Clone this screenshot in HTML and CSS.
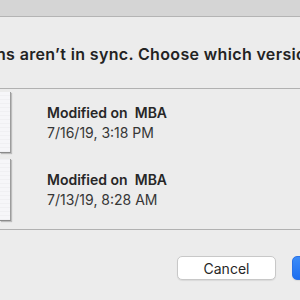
FILE: index.html
```html
<!DOCTYPE html>
<html lang="en">

<head>
    <meta charset="UTF-8">
    <meta name="viewport" content="width=device-width, initial-scale=1.0">
    <title>Versions</title>
    <link rel="stylesheet" href="styles.css">
</head>

<body>
    <div class="titlebar"></div>

    <div class="message">
        <p class="message-text">The versions aren’t in sync. Choose which version to keep.</p>
    </div>

    <div class="versions">
        <div class="version">
            <div class="thumb"></div>
            <div class="info">
                <div class="where">Modified on&nbsp; MBA</div>
                <div class="when">7/16/19, 3:18 PM</div>
            </div>
        </div>
        <div class="version">
            <div class="thumb tall"></div>
            <div class="info">
                <div class="where">Modified on&nbsp; MBA</div>
                <div class="when">7/13/19, 8:28 AM</div>
            </div>
        </div>
    </div>

    <div class="footer">
        <button class="btn">Cancel</button>
        <button class="btn default">Keep</button>
    </div>
</body>

</html>
```

FILE: styles.css
```css
body {
    margin: 0;
    width: 300px;
    height: 300px;
    overflow: hidden;
    background: #ececec;
    font-family: 'Inter', 'Liberation Sans', sans-serif;
    color: #262626;
}

.titlebar {
    height: 16px;
    background: #d5d5d5;
    border-bottom: 1px solid #b4b4b4;
}

.message {
    height: 72px;
    box-sizing: border-box;
    padding-top: 27px;
    border-bottom: 1px solid #b1b1b1;
}

.message-text {
    margin: 0 0 0 -89px;
    white-space: nowrap;
    font-size: 16px;
    line-height: 20px;
    letter-spacing: 0.35px;
    font-weight: 600;
    color: #232323;
}

.versions {
    display: flex;
    flex-direction: column;
    gap: 6px;
    padding: 3px 0 8px;
    border-bottom: 1px solid #b1b1b1;
}

.version {
    display: flex;
    align-items: center;
    gap: 36px;
}

.thumb {
    width: 11px;
    height: 61px;
    box-sizing: border-box;
    background-color: #f6f6f9;
    background-image: repeating-linear-gradient(0deg, rgba(0, 0, 0, 0.025) 0 1px, transparent 1px 4px);
    border-right: 1px solid #9c9c9c;
    border-bottom: 1px solid #8a8a8a;
    box-shadow: 1px 1px 1px rgba(0, 0, 0, 0.2);
}

.thumb.tall {
    height: 62px;
}

.info {
    font-size: 14px;
    line-height: 20px;
}

.where {
    font-weight: 600;
    color: #272727;
}

.when {
    color: #363636;
}

.footer {
    display: flex;
    gap: 16px;
    padding: 26px 0 0 177px;
}

.btn {
    flex-shrink: 0;
    width: 99px;
    height: 24px;
    padding: 0;
    font-family: inherit;
    font-size: 14px;
    color: #262626;
    background: #fff;
    border: 1px solid #c8c8c8;
    border-radius: 5px;
    box-shadow: 0 1px 1px rgba(0, 0, 0, 0.08);
}

.btn.default {
    color: #fff;
    background: linear-gradient(#3c8cf8, #1c6ef0);
    border-color: #2b72e6;
}
```
